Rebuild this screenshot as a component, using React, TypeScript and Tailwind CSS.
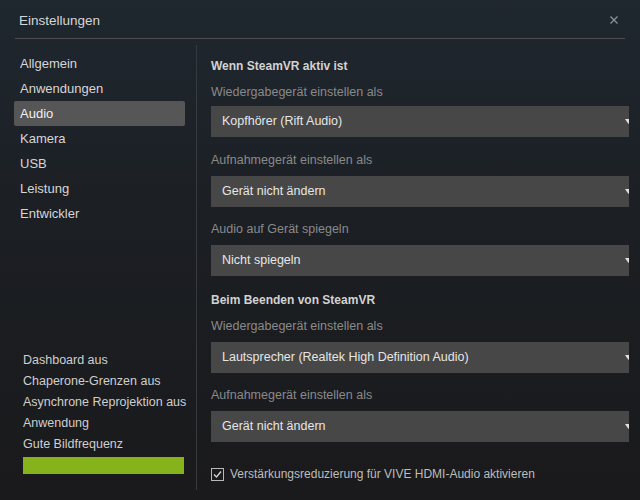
import React from "react";

const navItems = ["Allgemein", "Anwendungen", "Audio", "Kamera", "USB", "Leistung", "Entwickler"];
const statusItems = ["Dashboard aus", "Chaperone-Grenzen aus", "Asynchrone Reprojektion aus", "Anwendung", "Gute Bildfrequenz"];

function Dropdown({ value }: { value: string }) {
  return (
    <div className="relative h-[31px] bg-[#474747] flex items-center pl-[11px] text-[12.5px] text-[#e6e6e6] overflow-hidden">
      <span>{value}</span>
      <svg className="absolute right-[-3px] top-[13px]" width="7" height="5" viewBox="0 0 7 5">
        <polygon points="0,0 7,0 3.5,5" fill="#e0e0e0" />
      </svg>
    </div>
  );
}

function Label({ text, mb }: { text: string; mb?: string }) {
  return (
    <div className={`h-[20px] flex items-center text-[12.5px] text-[#8a8a8a] ${mb ?? "mb-[6px]"}`}>{text}</div>
  );
}

function Heading({ text }: { text: string }) {
  return <div className="h-[20px] flex items-center text-[12px] font-bold text-[#d2d2d2]">{text}</div>;
}

export default function App() {
  return (
    <div
      className="relative w-[640px] h-[500px] overflow-hidden bg-gradient-to-b from-[#1f272f] via-[#1b1e22] to-[#1a1a1c] flex flex-col"
      style={{ fontFamily: '"Liberation Sans", Arial, sans-serif' }}
    >
      {/* header */}
      <div className="h-[39px] shrink-0 mx-[15px] border-b border-[#4b4d50] flex items-center justify-between pl-[4px] pr-[2px] pt-[4px]">
        <span className="text-[13.5px] text-[#d4d6d8]">Einstellungen</span>
        <svg width="8" height="8" viewBox="0 0 8 8" className="mr-[5px] mb-[3px]">
          <path d="M0.5 0.5 L7.5 7.5 M7.5 0.5 L0.5 7.5" stroke="#8e9297" strokeWidth="1.3" />
        </svg>
      </div>

      <div className="flex flex-1 min-h-0">
        {/* sidebar */}
        <div className="w-[196px] shrink-0 pl-[14px] pr-[11px] pt-[12px] pb-[26px] flex flex-col justify-between">
          <div className="flex flex-col">
            {navItems.map((n) => (
              <div
                key={n}
                className={`h-[25px] flex items-center px-[6px] text-[13px] rounded-[2px] ${
                  n === "Audio" ? "bg-[#565656] text-[#f0f0f0]" : "text-[#d6d6d6]"
                }`}
              >
                {n}
              </div>
            ))}
          </div>
          <div className="flex flex-col pl-[9px]">
            {statusItems.map((s) => (
              <div key={s} className="h-[21px] flex items-center text-[12.5px] text-[#cfcfcf] whitespace-nowrap">
                {s}
              </div>
            ))}
            <div className="mt-[2px] h-[17px] w-[161px] bg-[#86b31b]" />
          </div>
        </div>

        {/* separator */}
        <div className="w-px shrink-0 bg-[#36393d] mt-[6px] mb-[10px]" />

        {/* content */}
        <div className="w-[432px] shrink-0 pl-[14px] pt-[17px] flex flex-col overflow-hidden">
          <Heading text="Wenn SteamVR aktiv ist" />
          <div className="mt-[6px]">
            <Label text="Wiedergabegerät einstellen als" mb="mb-[4px]" />
            <Dropdown value="Kopfhörer (Rift Audio)" />
          </div>
          <div className="mt-[13px]">
            <Label text="Aufnahmegerät einstellen als" />
            <Dropdown value="Gerät nicht ändern" />
          </div>
          <div className="mt-[12px]">
            <Label text="Audio auf Gerät spiegeln" />
            <Dropdown value="Nicht spiegeln" />
          </div>
          <div className="mt-[14px]">
            <Heading text="Beim Beenden von SteamVR" />
          </div>
          <div className="mt-[6px]">
            <Label text="Wiedergabegerät einstellen als" />
            <Dropdown value="Lautsprecher (Realtek High Definition Audio)" />
          </div>
          <div className="mt-[12px]">
            <Label text="Aufnahmegerät einstellen als" />
            <Dropdown value="Gerät nicht ändern" />
          </div>
          <div className="mt-[22px] flex items-center h-[20px] gap-[6px]">
            <div className="w-[13px] h-[13px] border border-[#b8b8b8] flex items-center justify-center">
              <svg width="11" height="11" viewBox="0 0 11 11">
                <path d="M2 5.5 L4.5 8 L9 2.5" stroke="#d0d0d0" strokeWidth="1.4" fill="none" />
              </svg>
            </div>
            <span className="text-[12px] text-[#bdbdbd]">Verstärkungsreduzierung für VIVE HDMI-Audio aktivieren</span>
          </div>
        </div>
      </div>
    </div>
  );
}
